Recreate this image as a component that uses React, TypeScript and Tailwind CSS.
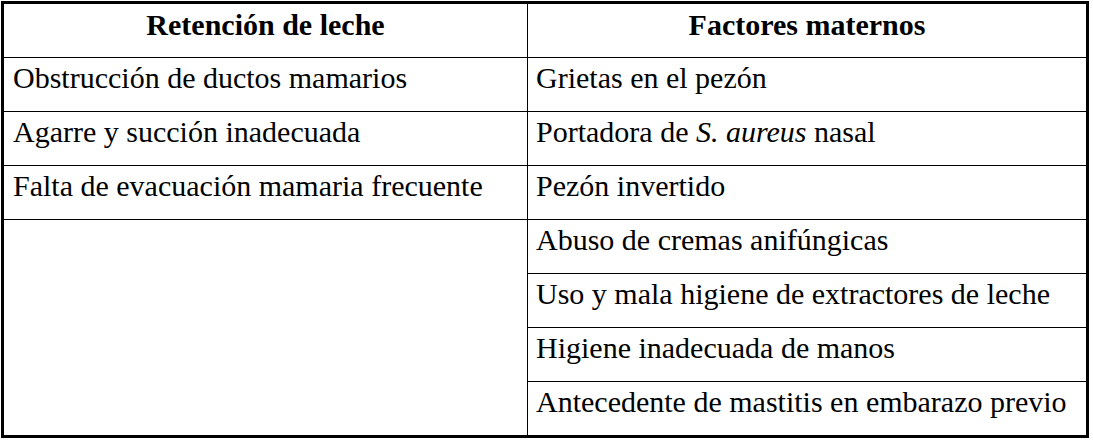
import React from 'react';

const leftRows = [
  'Obstrucción de ductos mamarios',
  'Agarre y succión inadecuada',
  'Falta de evacuación mamaria frecuente',
];

const rightRows: React.ReactNode[] = [
  'Grietas en el pezón',
  <>
    Portadora de <i>S. aureus</i> nasal
  </>,
  'Pezón invertido',
  'Abuso de cremas anifúngicas',
  'Uso y mala higiene de extractores de leche',
  'Higiene inadecuada de manos',
  'Antecedente de mastitis en embarazo previo',
];

export default function App() {
  return (
    <div className="w-[1093px] h-[441px] bg-white pl-px pt-px font-['Liberation_Serif',serif] text-[30px] leading-[34px] text-black">
      <div className="flex w-[1088px] h-[437px] border-[3px] border-black">
        {/* Retención de leche */}
        <div className="flex flex-col w-[524px] border-r border-black">
          <div className="h-[54px] border-b border-black pt-[4px] text-center font-bold">
            Retención de leche
          </div>
          {leftRows.map((text) => (
            <div key={text} className="h-[54px] border-b border-black pt-[3px] pl-[9px]">
              {text}
            </div>
          ))}
          <div className="flex-1" />
        </div>

        {/* Factores maternos */}
        <div className="flex flex-col flex-1">
          <div className="h-[54px] border-b border-black pt-[4px] text-center font-bold">
            Factores maternos
          </div>
          {rightRows.map((text, i) => (
            <div
              key={i}
              className={`pt-[3px] pl-[8px] whitespace-nowrap ${
                i === rightRows.length - 1 ? 'h-[53px]' : 'h-[54px] border-b border-black'
              }`}
            >
              {text}
            </div>
          ))}
        </div>
      </div>
    </div>
  );
}
